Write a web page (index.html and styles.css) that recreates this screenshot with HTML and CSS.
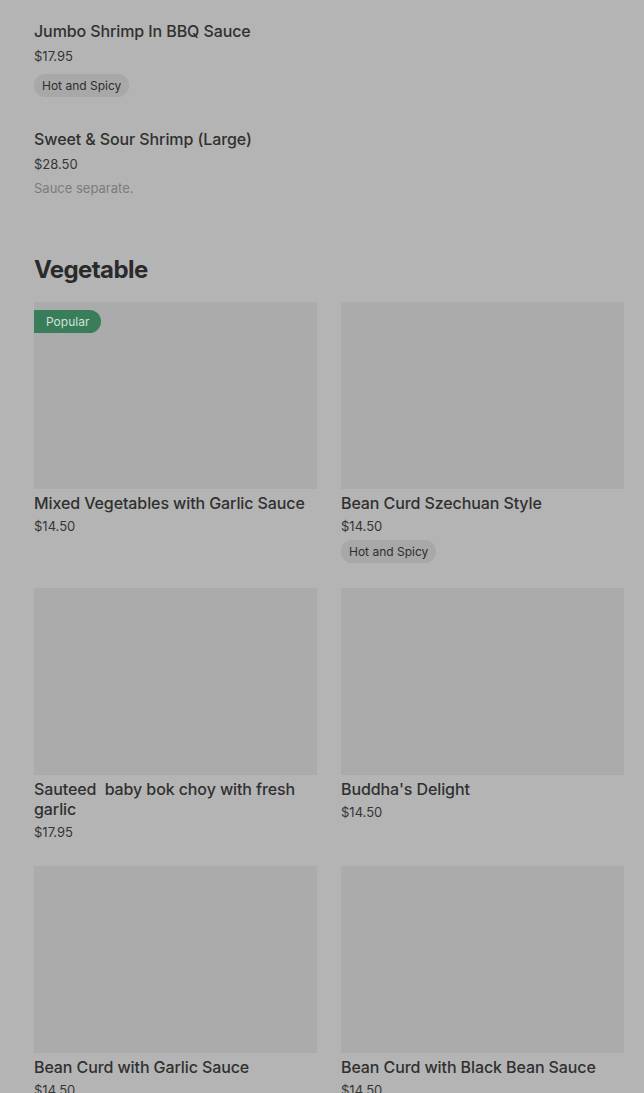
FILE: index.html
```html
<!DOCTYPE html>
<html lang="en">
<head>
    <meta charset="UTF-8">
    <title>Menu</title>
    <link rel="stylesheet" href="styles.css">
</head>
<body>
    <main class="menu">
        <section class="list">
            <div class="item">
                <h4 class="name">Jumbo Shrimp In BBQ Sauce</h4>
                <div class="price">$17.95</div>
                <span class="tag">Hot and Spicy</span>
            </div>
            <div class="item">
                <h4 class="name">Sweet &amp; Sour Shrimp (Large)</h4>
                <div class="price">$28.50</div>
                <div class="desc">Sauce separate.</div>
            </div>
        </section>

        <section class="category">
            <h2 class="catTitle">Vegetable</h2>
            <div class="grid">
                <div class="card">
                    <div class="thumb"><span class="popular">Popular</span></div>
                    <h4 class="name">Mixed Vegetables with Garlic Sauce</h4>
                    <div class="price">$14.50</div>
                </div>
                <div class="card">
                    <div class="thumb"></div>
                    <h4 class="name">Bean Curd Szechuan Style</h4>
                    <div class="price">$14.50</div>
                    <span class="tag">Hot and Spicy</span>
                </div>
                <div class="card">
                    <div class="thumb"></div>
                    <h4 class="name">Sauteed&nbsp; baby bok choy with fresh garlic</h4>
                    <div class="price">$17.95</div>
                </div>
                <div class="card">
                    <div class="thumb"></div>
                    <h4 class="name">Buddha's Delight</h4>
                    <div class="price">$14.50</div>
                </div>
                <div class="card">
                    <div class="thumb"></div>
                    <h4 class="name">Bean Curd with Garlic Sauce</h4>
                    <div class="price">$14.50</div>
                </div>
                <div class="card">
                    <div class="thumb"></div>
                    <h4 class="name">Bean Curd with Black Bean Sauce</h4>
                    <div class="price">$14.50</div>
                </div>
            </div>
        </section>
    </main>
</body>
</html>
```

FILE: styles.css
```css
body{
    margin:0;
    background:#b4b4b4;
    font-family: "Inter", "Roboto", "Liberation Sans", sans-serif;
    color:#2e2e2e;
    overflow:hidden;
}
.menu{
    padding:21px 20px 0 34px;
}
.list{
    display:flex;
    flex-direction:column;
    gap:32px;
}
.item{
    display:flex;
    flex-direction:column;
    align-items:flex-start;
}
.name{
    margin:0;
    font-size:16px;
    font-weight:500;
    line-height:20px;
    letter-spacing:-0.1px;
    color:#303030;
}
.price{
    font-size:13px;
    line-height:18px;
    margin-top:6px;
    color:#363636;
}
.desc{
    font-size:13px;
    line-height:18px;
    margin-top:6px;
    color:#7c7c7c;
}
.tag{
    display:inline-block;
    margin-top:9px;
    padding:0 8px;
    height:23px;
    line-height:23px;
    border-radius:12px;
    background:#a8a8a8;
    font-size:12px;
    color:#2e2e2e;
}
.category{
    margin-top:58px;
}
.catTitle{
    margin:0 0 17px;
    font-size:24px;
    font-weight:700;
    line-height:30px;
    letter-spacing:-0.6px;
    color:#2a2a2a;
}
.grid{
    display:grid;
    grid-template-columns:283px 283px;
    column-gap:24px;
    row-gap:25px;
}
.card{
    display:flex;
    flex-direction:column;
    align-items:flex-start;
}
.card .name{
    margin-top:4px;
}
.card .price{
    margin-top:4px;
}
.card .tag{
    margin-top:5px;
}
.thumb{
    position:relative;
    width:100%;
    height:187px;
    background:#ababab;
}
.popular{
    position:absolute;
    left:0;
    top:8px;
    height:23px;
    line-height:23px;
    padding:0 12px;
    background:#3a7d5b;
    color:#cfe3d6;
    font-size:12px;
    border-radius:0 12px 12px 0;
}
```
